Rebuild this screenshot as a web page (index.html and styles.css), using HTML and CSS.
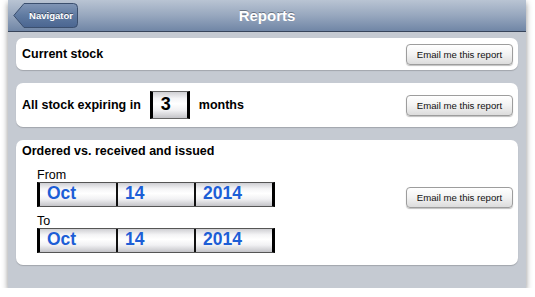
FILE: index.html
```html
<!DOCTYPE html>
<html lang="en">
<head>
    <meta charset="UTF-8">
    <title>Reports</title>
    <link rel="stylesheet" href="styles.css">
</head>
<body>

    <div class="window">
        <header class="navbar">
            <div class="nav-side">
                <a class="back-button" href="#">
                    <svg class="back-shape" width="65" height="25" viewBox="0 0 65 25">
                        <defs>
                            <linearGradient id="backFill" x1="0" y1="0" x2="0" y2="1">
                                <stop offset="0" stop-color="#8196b6"/>
                                <stop offset="0.5" stop-color="#5f7aa1"/>
                                <stop offset="1" stop-color="#4a6590"/>
                            </linearGradient>
                        </defs>
                        <path d="M11 0.5 H60.5 a4 4 0 0 1 4 4 V20.5 a4 4 0 0 1 -4 4 H11 L0.8 12.5 Z" fill="url(#backFill)" stroke="#3b4f6e"/>
                    </svg>
                    <span class="back-label">Navigator</span>
                </a>
            </div>
            <div class="nav-title">Reports</div>
            <div class="nav-side"></div>
        </header>

        <main class="reports">
            <section class="report-card report-short">
                <div class="report-title">Current stock</div>
                <button class="email-button">Email me this report</button>
            </section>

            <section class="report-card report-expiry">
                <div class="expiry-row">
                    <span class="report-title">All stock expiring in</span>
                    <div class="picker-box months-box">3</div>
                    <span class="report-title">months</span>
                </div>
                <button class="email-button">Email me this report</button>
            </section>

            <section class="report-card report-range">
                <div class="range-body">
                    <div class="report-title">Ordered vs. received and issued</div>
                    <div class="range-fields">
                        <div class="field-label">From</div>
                        <div class="date-picker">
                            <div class="date-part">Oct</div>
                            <div class="date-part">14</div>
                            <div class="date-part">2014</div>
                        </div>
                        <div class="field-label label-to">To</div>
                        <div class="date-picker">
                            <div class="date-part">Oct</div>
                            <div class="date-part">14</div>
                            <div class="date-part">2014</div>
                        </div>
                    </div>
                </div>
                <button class="email-button range-button">Email me this report</button>
            </section>
        </main>
    </div>

</body>
</html>
```

FILE: styles.css
```css
body {
    margin: 0;
    padding: 0;
    background: #ffffff;
    font-family: 'Liberation Sans', Arial, sans-serif;
    color: #000;
}

.window {
    margin-left: 8px;
    width: 518px;
    height: 288px;
    background: #c5cad2;
    box-shadow: 0 3px 6px rgba(0, 0, 0, 0.45);
    overflow: hidden;
}

/* top bar */
.navbar {
    height: 31px;
    display: grid;
    grid-template-columns: 1fr auto 1fr;
    align-items: center;
    background: linear-gradient(#b9c4d3, #97a7be 50%, #7086a6);
    border-bottom: 1px solid #37445a;
}

.nav-side {
    padding-left: 5px;
}

.back-button {
    position: relative;
    display: block;
    width: 65px;
    height: 25px;
    text-decoration: none;
}

.back-shape {
    position: absolute;
    left: 0;
    top: 0;
}

.back-label {
    position: relative;
    display: block;
    padding-left: 11px;
    width: 54px;
    text-align: center;
    line-height: 25px;
    font-size: 9.5px;
    font-weight: 700;
    color: #fff;
    text-shadow: 0 -1px 0 rgba(0, 0, 0, 0.45);
}

.nav-title {
    font-size: 15px;
    font-weight: 700;
    color: #fff;
    text-shadow: 0 -1px 0 rgba(0, 0, 0, 0.35);
}

/* report list */
.reports {
    display: flex;
    flex-direction: column;
    gap: 13px;
    padding: 6px 8px 0 8px;
}

.report-card {
    background: #fff;
    border-radius: 7px;
    box-shadow: 0 1px 1px rgba(0, 0, 0, 0.18);
    display: flex;
    align-items: center;
    justify-content: space-between;
    padding: 0 5px 0 6px;
}

.report-title {
    font-size: 12.5px;
    font-weight: 700;
    line-height: 14px;
}

.report-short {
    height: 32px;
}

.report-expiry {
    height: 44px;
}

.expiry-row {
    display: flex;
    align-items: center;
    gap: 8px;
}

.email-button {
    width: 107px;
    height: 21px;
    padding: 0;
    font-family: 'Liberation Sans', Arial, sans-serif;
    font-size: 9.6px;
    color: #111;
    background: linear-gradient(#ffffff, #f2f2f2 50%, #dcdcdc);
    border: 1px solid #9d9d9d;
    border-radius: 4px;
    box-shadow: 0 1px 1px rgba(0, 0, 0, 0.25);
}

/* wheel style boxes */
.picker-box,
.date-part {
    background: linear-gradient(#cfcfd3, #f4f4f6 25%, #ffffff 45%, #f1f1f3 70%, #c4c4c8);
}

.months-box {
    box-sizing: border-box;
    width: 40px;
    height: 28px;
    border-top: 1px solid #666;
    border-bottom: 1px solid #666;
    border-left: 3px solid #000;
    border-right: 3px solid #000;
    padding-left: 8px;
    margin: 0 1px 0 1px;
    font-size: 18px;
    font-weight: 700;
    line-height: 24px;
}

.report-range {
    height: 125px;
}

.range-body {
    align-self: flex-start;
    padding-top: 4px;
}

.range-fields {
    padding: 10px 0 0 15px;
}

.field-label {
    font-size: 12.5px;
    line-height: 14px;
}

.label-to {
    margin-top: 7px;
}

.date-picker {
    display: grid;
    grid-template-columns: repeat(3, 76px);
    gap: 2px;
    box-sizing: border-box;
    width: 238px;
    height: 25px;
    background: #111;
    border-top: 1px solid #555;
    border-bottom: 1px solid #555;
    border-left: 3px solid #000;
    border-right: 3px solid #000;
}

.date-part {
    padding-left: 7px;
    font-size: 17.5px;
    font-weight: 700;
    line-height: 21px;
    color: #1d5ed6;
}

.range-button {
    margin-bottom: 10px;
}
```
